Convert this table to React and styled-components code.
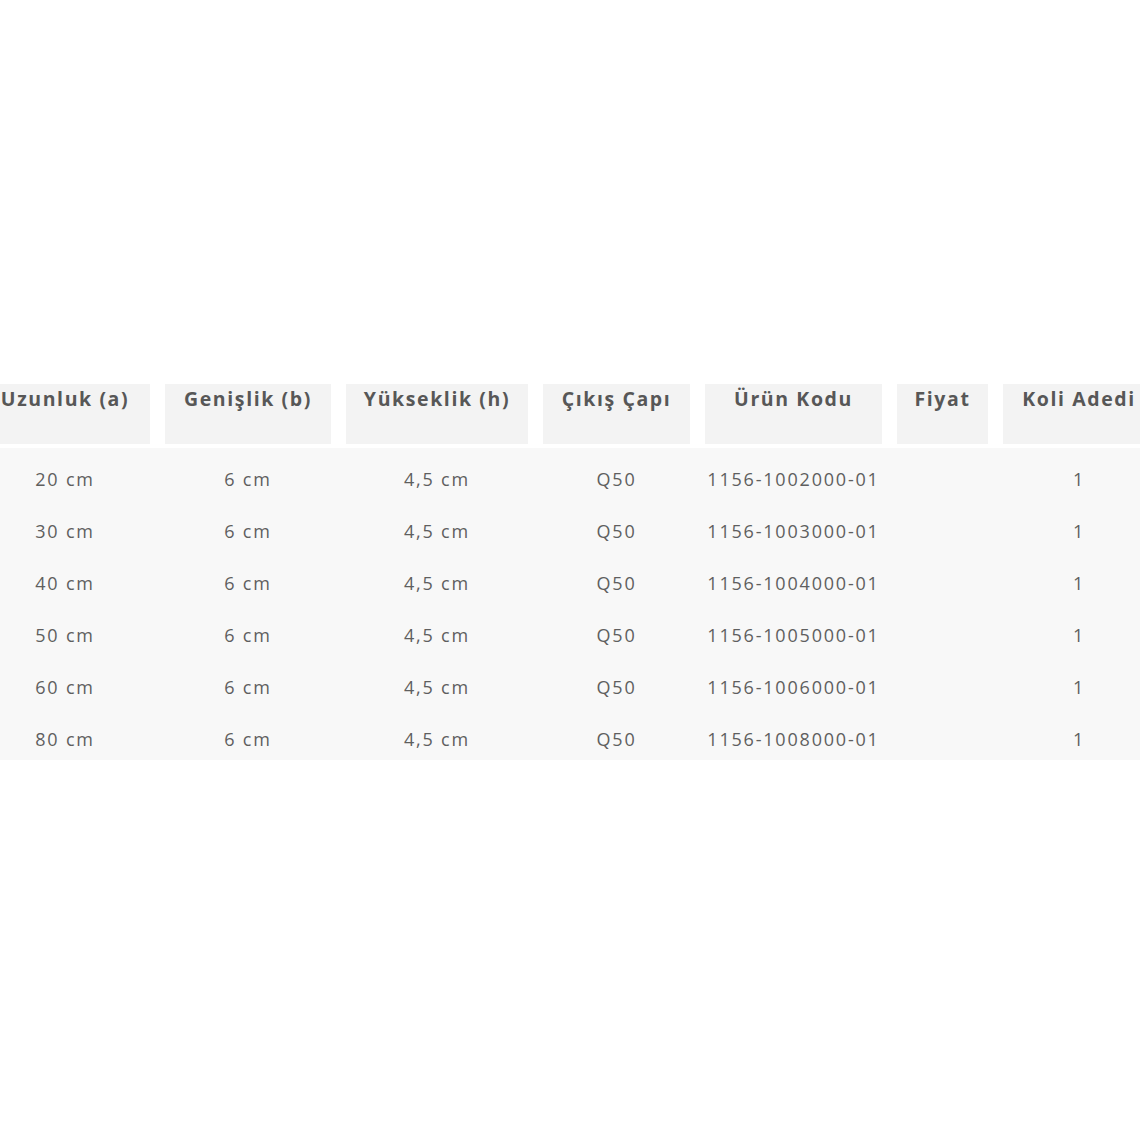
import React from 'react';
import styled, { createGlobalStyle } from 'styled-components';

const GlobalStyle = createGlobalStyle`
  html, body {
    margin: 0;
    padding: 0;
    background: #ffffff;
  }
  body {
    font-family: "Open Sans", "Liberation Sans", sans-serif;
    overflow: hidden;
  }
`;

const Page = styled.div`
  width: 1140px;
  height: 1140px;
  padding-top: 384px;
  box-sizing: border-box;
  overflow: hidden;
`;

const Table = styled.div`
  margin-left: -20px;
  width: 1175px;
  display: flex;
  flex-direction: column;
  gap: 4px;
`;

const columns = '170px 166px 182px 147px 177px 91px 152px';

const HeadRow = styled.div`
  display: grid;
  grid-template-columns: ${columns};
  column-gap: 15px;
`;

const HeadCell = styled.div`
  height: 60px;
  background: #f3f3f3;
  color: #575757;
  font-size: 19.5px;
  font-weight: 700;
  letter-spacing: 1.6px;
  text-align: center;
  padding-top: 1px;
  box-sizing: border-box;
  white-space: nowrap;
`;

const Body = styled.div`
  background: #f8f8f8;
`;

const Row = styled.div`
  display: grid;
  grid-template-columns: ${columns};
  column-gap: 15px;
  height: 52px;
  align-items: center;
`;

const Cell = styled.div`
  padding-top: 10px;
  text-align: center;
  color: #5f5f5f;
  font-size: 18px;
  letter-spacing: 1.8px;
  white-space: nowrap;
`;

const headers = ['Uzunluk (a)', 'Genişlik (b)', 'Yükseklik (h)', 'Çıkış Çapı', 'Ürün Kodu', 'Fiyat', 'Koli Adedi'];

const lengths = [20, 30, 40, 50, 60, 80];

export default function App() {
  return (
    <>
      <GlobalStyle />
      <Page>
        <Table>
          <HeadRow>
            {headers.map((h) => (
              <HeadCell key={h}>{h}</HeadCell>
            ))}
          </HeadRow>
          <Body>
            {lengths.map((l) => (
              <Row key={l}>
                <Cell>{l} cm</Cell>
                <Cell>6 cm</Cell>
                <Cell>4,5 cm</Cell>
                <Cell>Q50</Cell>
                <Cell>1156-100{l / 10}000-01</Cell>
                <Cell></Cell>
                <Cell>1</Cell>
              </Row>
            ))}
          </Body>
        </Table>
      </Page>
    </>
  );
}
